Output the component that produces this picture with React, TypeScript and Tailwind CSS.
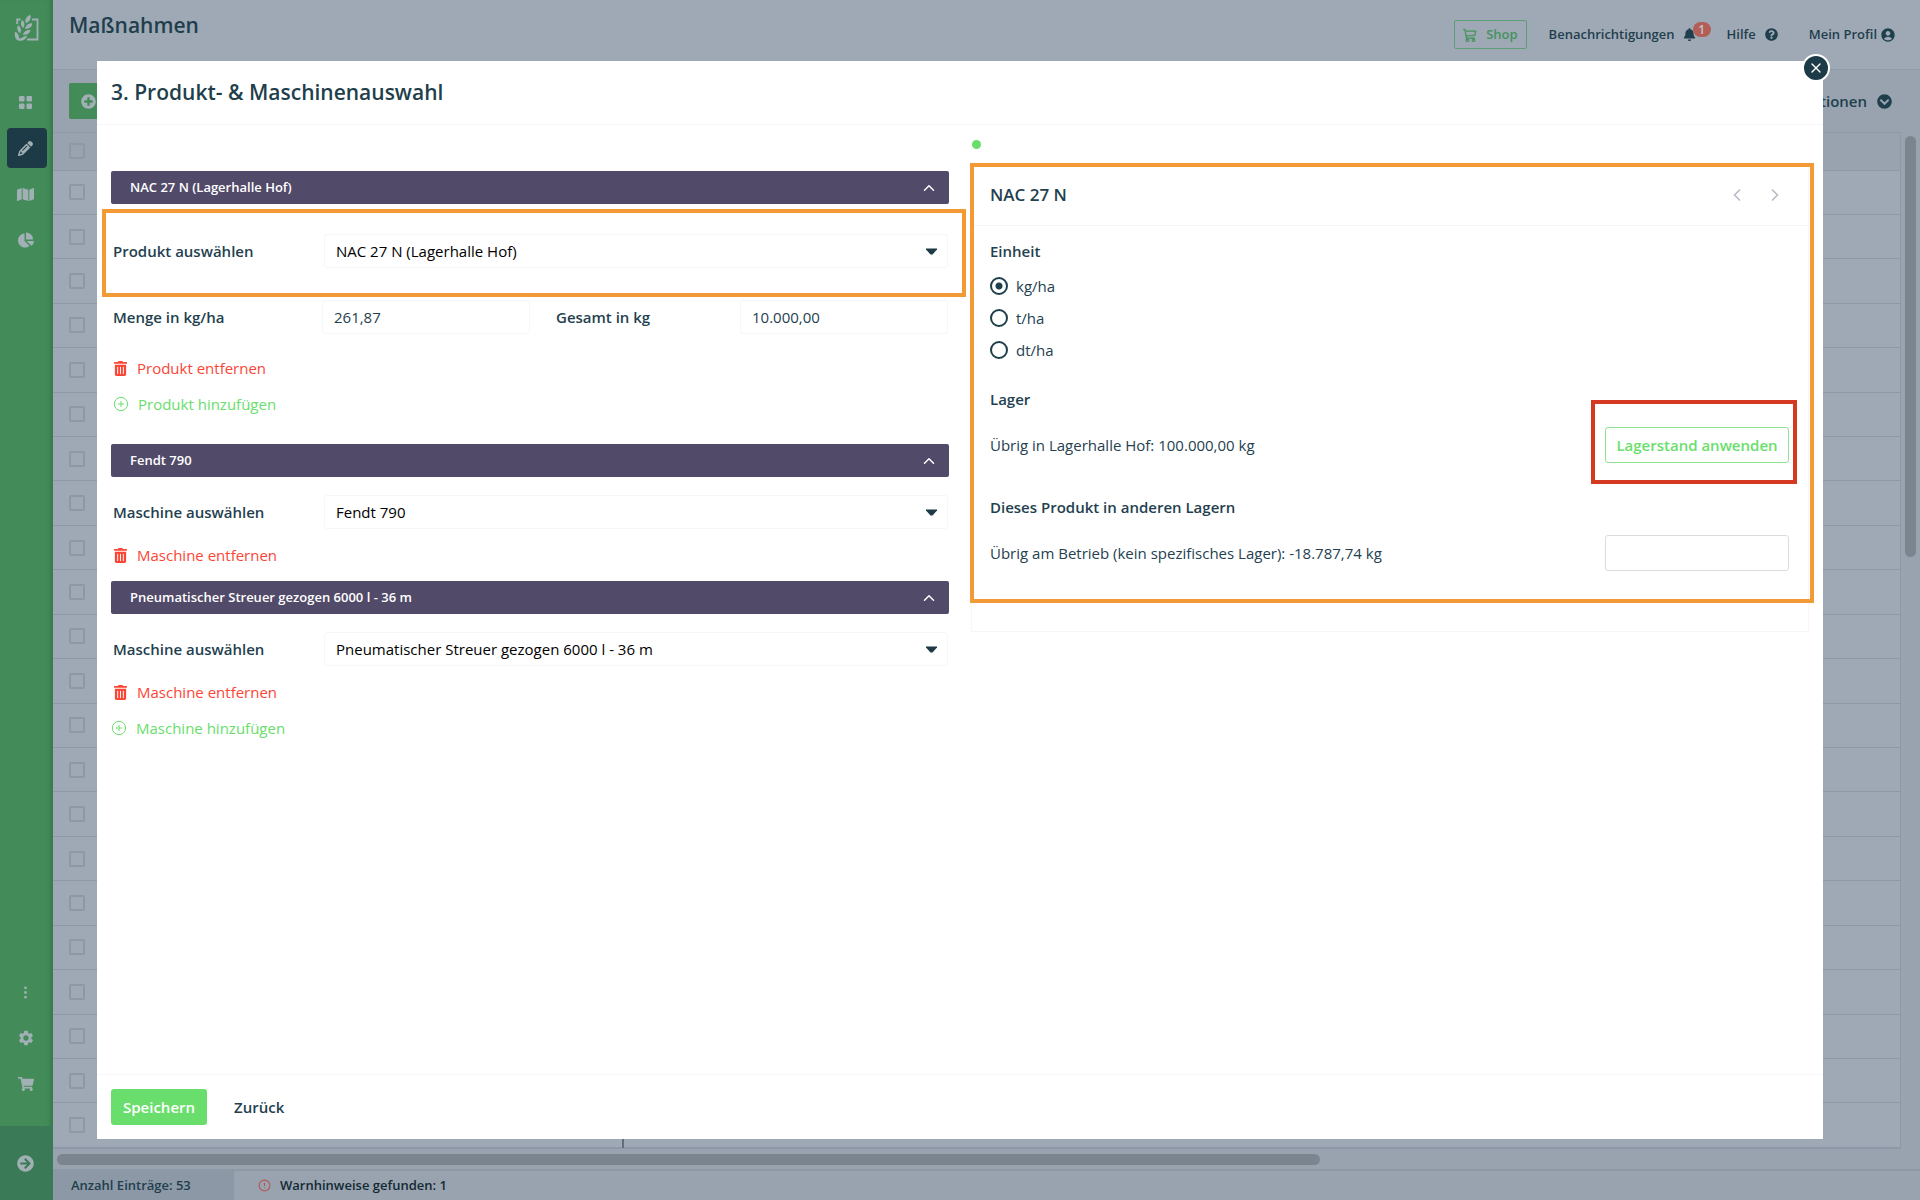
import { type ReactNode, useId, useState } from "react";
import { ChevronLeft, ChevronRight, ChevronUp, CircleAlert, CirclePlus, X } from "lucide-react";
import { BsCart3, BsGridFill, BsThreeDotsVertical } from "react-icons/bs";
import {
  FaArrowCircleRight,
  FaBell,
  FaChartPie,
  FaChevronCircleDown,
  FaMap,
  FaPlusCircle,
  FaQuestionCircle,
  FaShoppingCart,
  FaTrashAlt,
} from "react-icons/fa";
import { FaPencil } from "react-icons/fa6";
import { MdAccountCircle, MdSettings } from "react-icons/md";

const ROWS = Array.from({ length: 22 }, (_, i) => i + 1);

function Logo() {
  return (
    <svg viewBox="0 0 26 28" className="h-7 w-[26px]" fill="none" aria-hidden="true">
      <path d="M3.200 10V5.500H6.500M18 5.500H23.500V25.500H13" stroke="currentColor" strokeWidth="1.800" />
      <g fill="currentColor">
        <path d="M16.200.8C17.400 4 16.400 7 12 9.300 10.300 6 12 2.700 16.200.8Z" />
        <path d="M8.200 6C10.600 8 11.200 10.600 9.300 14 6.600 12 6.200 9 8.200 6Z" />
        <path d="M18.200 9.200C18.400 12.600 15.800 14.900 11 14.900 11.800 11.200 14.400 9.100 18.200 9.200Z" />
        <path d="M4 11.300C6.800 13 7.700 16 6.300 19.300 3.300 17.500 2.500 14.500 4 11.300Z" />
        <path d="M16.500 16C16.200 19.300 13.400 21 8.800 20.700 9.800 17.400 12.500 15.600 16.500 16Z" />
        <path d="M1.200 17.500C3.800 19 5.200 21.500 5 24.500 9 24.500 9.500 21.800 13.200 21.800 12 25.600 8.500 27.600 4.200 26.500 1.300 25.600.1 21.500 1.200 17.500Z" />
      </g>
    </svg>
  );
}

function NavButton({ label, active, children }: { label: string; active?: boolean; children: ReactNode }) {
  return (
    <button
      type="button"
      aria-label={label}
      className={`flex size-10 items-center justify-center rounded-sm pr-[2px] ${active ? "bg-[#1d3a47]" : ""}`}
    >
      {children}
    </button>
  );
}

function Sidebar() {
  return (
    <nav className="flex w-[53px] shrink-0 flex-col items-center bg-[#438c59] text-[#a0b0b4] shadow-[inset_-5px_0_5px_-3px_#34744a]">
      <a href="#start" aria-label="Startseite" className="mt-[14px] mb-10">
        <Logo />
      </a>
      <div className="flex flex-col gap-[6px]">
        <NavButton label="Übersicht">
          <BsGridFill size={15} />
        </NavButton>
        <NavButton label="Maßnahmen" active>
          <FaPencil size={15} />
        </NavButton>
        <NavButton label="Karte">
          <FaMap size={17} />
        </NavButton>
        <NavButton label="Auswertung">
          <FaChartPie size={16} />
        </NavButton>
      </div>
      <div className="mt-auto mb-[22px] flex flex-col gap-[6px]">
        <NavButton label="Mehr">
          <BsThreeDotsVertical size={15} />
        </NavButton>
        <NavButton label="Einstellungen">
          <MdSettings size={18} />
        </NavButton>
        <NavButton label="Shop">
          <FaShoppingCart size={16} />
        </NavButton>
      </div>
      <div className="flex h-[74px] w-full items-center justify-center bg-[#3b7a56]">
        <NavButton label="Menü ausklappen">
          <FaArrowCircleRight size={17} />
        </NavButton>
      </div>
    </nav>
  );
}

function TopBar() {
  return (
    <header className="flex h-[70px] shrink-0 items-start justify-between border-b border-[#919cab] pr-6 pl-4">
      <h1 className="mt-[9px] text-[21px] leading-8 font-semibold">Maßnahmen</h1>
      <div className="mt-5 flex h-[29px] items-center text-[13px] font-semibold">
        <a
          href="#shop"
          className="flex h-full items-center gap-[9px] rounded-[2px] border border-[#5a9f75] px-2 text-[#45935e]"
        >
          <BsCart3 size={14} strokeWidth={0.5} />
          Shop
        </a>
        <a href="#benachrichtigungen" className="ml-[22px] flex items-center gap-2">
          Benachrichtigungen
          <span className="relative">
            <FaBell size={13} />
            <span className="absolute -top-[6px] left-[10px] flex h-[15px] w-[18px] items-center justify-center rounded-full bg-[#b35f58] text-xs text-[#c5c3cb]">
              1
            </span>
          </span>
        </a>
        <a href="#hilfe" className="ml-[31px] flex items-center gap-[9px]">
          Hilfe
          <FaQuestionCircle size={13} />
        </a>
        <a href="#profil" className="ml-[31px] flex items-center gap-[3px]">
          Mein Profil
          <MdAccountCircle size={16} />
        </a>
      </div>
    </header>
  );
}

function RowCheckbox({ label }: { label: string }) {
  return (
    <input
      type="checkbox"
      aria-label={label}
      className="block size-4 appearance-none rounded-[2px] border-2 border-[#8c98a6]"
    />
  );
}

function Background() {
  return (
    <div className="flex h-screen bg-[#9fa9b6] text-[#1f3f4d]">
      <Sidebar />
      <div className="flex min-w-0 flex-1 flex-col">
        <TopBar />
        <div className="flex h-[62px] shrink-0 items-center justify-between bg-[#99a3b0] pr-7 pl-4">
          <button
            type="button"
            aria-label="Maßnahme hinzufügen"
            className="flex h-9 w-40 items-center rounded-[2px] bg-[#438c59] px-3 text-[#a0b0b4]"
          >
            <FaPlusCircle size={15} />
          </button>
          <button type="button" className="flex items-center gap-[10px] text-[15px] font-semibold">
            Aktionen
            <FaChevronCircleDown size={15} />
          </button>
        </div>
        <div className="flex min-h-0 flex-1 bg-[#99a3b0]">
          <div className="relative min-w-0 flex-1 border-y border-r border-[#8d99a8]">
            <table className="h-full w-full border-collapse">
              <tbody>
                <tr className="h-[37px] bg-[#99a3b0]">
                  <td className="border-b border-[#8d99a8] py-0 pl-4">
                    <RowCheckbox label="Alle auswählen" />
                  </td>
                </tr>
                {ROWS.map((row) => (
                  <tr key={row} className="bg-[#9fa9b6]">
                    <td className="border-b border-[#8d99a8] py-0 pl-4">
                      <RowCheckbox label={`Eintrag ${row} auswählen`} />
                    </td>
                  </tr>
                ))}
              </tbody>
            </table>
            <div className="absolute bottom-0 left-[569px] h-4 w-[2px] bg-[#5f6f7b]" />
          </div>
          <div className="w-[19px] shrink-0 pt-1 pl-1">
            <div className="h-[421px] w-[11px] rounded-full bg-[#7b858f]" />
          </div>
        </div>
        <div className="flex h-5 shrink-0 items-center bg-[#99a3b0] pl-1">
          <div className="h-[11px] w-[1263px] rounded-full bg-[#7b858f]" />
        </div>
        <footer className="flex h-[31px] shrink-0 border-t-2 border-[#8c98a4] bg-[#99a3b0] text-[13px] font-semibold">
          <div className="flex w-[181px] items-center bg-[#8c98a6] pl-[18px]">Anzahl Einträge: 53</div>
          <div className="flex items-center gap-[9px] pl-6 text-[#132a33]">
            <CircleAlert size={13} className="text-[#b3564f]" />
            Warnhinweise gefunden: 1
          </div>
        </footer>
      </div>
    </div>
  );
}

function Section({ title, children }: { title: string; children: ReactNode }) {
  return (
    <section>
      <button
        type="button"
        aria-expanded="true"
        className="flex h-[33px] w-full items-center justify-between rounded-[2px] bg-[#524a69] pr-[11px] pl-[19px] text-[13px] font-semibold text-white"
      >
        {title}
        <ChevronUp size={18} />
      </button>
      {children}
    </section>
  );
}

function SelectRow({ label, value }: { label: string; value: string }) {
  const id = useId();
  return (
    <div className="flex h-[34px] items-center">
      <label htmlFor={id} className="w-[213px] shrink-0 pl-[2px] font-semibold">
        {label}
      </label>
      <div className="relative mr-px flex-1">
        <select
          id={id}
          className="block h-[34px] w-full appearance-none rounded-[3px] border border-[#f7f7f7] bg-white pl-[11px] text-black"
        >
          <option>{value}</option>
        </select>
        <svg viewBox="0 0 11 7" className="pointer-events-none absolute top-[14px] right-[11px] h-[7px] w-[11px]">
          <path d="M0 0.500H11V1.500L6.500 6.500H4.500L0 1.500Z" fill="#1d3a47" />
        </svg>
      </div>
    </div>
  );
}

function NumberField({ label, value, className }: { label: string; value: string; className: string }) {
  const id = useId();
  return (
    <>
      <label htmlFor={id} className={`shrink-0 font-semibold ${className}`}>
        {label}
      </label>
      <input
        id={id}
        defaultValue={value}
        className="h-[34px] w-0 flex-1 rounded-[3px] border border-[#f7f7f7] px-[11px]"
      />
    </>
  );
}

function RemoveButton({ children }: { children: string }) {
  return (
    <button type="button" className="flex h-6 items-center gap-[9px] pl-[2px] text-[#fb4536]">
      <FaTrashAlt size={15} />
      {children}
    </button>
  );
}

function AddButton({ children }: { children: string }) {
  return (
    <button type="button" className="flex h-6 items-center gap-[9px] text-[#69de6c]">
      <CirclePlus size={16} strokeWidth={1.5} />
      {children}
    </button>
  );
}

function ProductColumn() {
  return (
    <div className="flex-1 pt-[46px]">
      <Section title="NAC 27 N (Lagerhalle Hof)">
        <div className="relative mt-[30px]">
          <SelectRow label="Produkt auswählen" value="NAC 27 N (Lagerhalle Hof)" />
          <div className="pointer-events-none absolute -top-[25px] -right-[17px] -bottom-[29px] -left-[9px] border-4 border-[#f39a36]" />
        </div>
        <div className="mt-8 flex items-center pr-px">
          <NumberField label="Menge in kg/ha" value="261,87" className="w-[211px] pl-[2px]" />
          <NumberField label="Gesamt in kg" value="10.000,00" className="w-[210px] pl-[26px]" />
        </div>
        <div className="mt-[22px] mb-3">
          <RemoveButton>Produkt entfernen</RemoveButton>
        </div>
        <div className="mb-7 pl-[2px]">
          <AddButton>Produkt hinzufügen</AddButton>
        </div>
      </Section>
      <Section title="Fendt 790">
        <div className="mt-[18px] mb-[14px]">
          <SelectRow label="Maschine auswählen" value="Fendt 790" />
        </div>
        <RemoveButton>Maschine entfernen</RemoveButton>
      </Section>
      <div className="mt-[14px]">
        <Section title="Pneumatischer Streuer gezogen 6000 l - 36 m">
          <div className="mt-[18px] mb-[14px]">
            <SelectRow label="Maschine auswählen" value="Pneumatischer Streuer gezogen 6000 l - 36 m" />
          </div>
          <RemoveButton>Maschine entfernen</RemoveButton>
        </Section>
      </div>
      <div className="mt-3">
        <AddButton>Maschine hinzufügen</AddButton>
      </div>
    </div>
  );
}

function DetailColumn() {
  const [unit, setUnit] = useState("kg/ha");
  return (
    <div className="flex-1 pt-[15px]">
      <div className="ml-px size-[9px] rounded-full bg-[#69de6c]" />
      <article className="relative mt-4 h-[467px] border border-[#f7f7f7]">
        <div className="flex h-[60px] items-center justify-between border-b border-[#f5f5f5] pr-[23px] pb-[2px] pl-[18px]">
          <h3 className="text-[17px] font-semibold">NAC 27 N</h3>
          <div className="flex gap-[18px] text-[#bdb9c4]">
            <button type="button" aria-label="Vorheriges Produkt">
              <ChevronLeft size={20} />
            </button>
            <button type="button" aria-label="Nächstes Produkt">
              <ChevronRight size={20} />
            </button>
          </div>
        </div>
        <div className="pr-[19px] pl-[18px]">
          <fieldset className="pt-[15px]">
            <legend className="contents">
              <span className="block h-5 leading-5 font-semibold">Einheit</span>
            </legend>
            <div className="mt-[13px] flex flex-col gap-2">
              {["kg/ha", "t/ha", "dt/ha"].map((option) => (
                <label key={option} className="flex h-6 items-center gap-2">
                  <input
                    type="radio"
                    name="unit"
                    checked={unit === option}
                    onChange={() => setUnit(option)}
                    className="size-[18px] appearance-none rounded-full border-2 border-[#1f3f4d] checked:bg-[radial-gradient(circle,#1f3f4d_3px,transparent_4px)]"
                  />
                  {option}
                </label>
              ))}
            </div>
          </fieldset>
          <h4 className="mt-[27px] leading-5 font-semibold">Lager</h4>
          <div className="mt-[18px] flex items-center justify-between">
            <span>Übrig in Lagerhalle Hof: 100.000,00 kg</span>
            <div className="relative">
              <button
                type="button"
                className="block h-9 w-[184px] rounded-[3px] border border-[#8ee490] font-semibold text-[#69de6c]"
              >
                Lagerstand anwenden
              </button>
              <div className="pointer-events-none absolute -top-[27px] -right-2 -bottom-[21px] -left-[14px] border-4 border-[#d43a22]" />
            </div>
          </div>
          <h4 className="mt-[34px] leading-5 font-semibold">Dieses Produkt in anderen Lagern</h4>
          <div className="mt-[18px] flex items-center justify-between">
            <label htmlFor="farm-stock">Übrig am Betrieb (kein spezifisches Lager): -18.787,74 kg</label>
            <input id="farm-stock" className="h-9 w-[184px] rounded-[3px] border border-[#dcdcdc] px-2" />
          </div>
        </div>
        <div className="pointer-events-none absolute -top-[3px] -right-[6px] bottom-[28px] -left-[2px] border-4 border-[#f39a36]" />
      </article>
    </div>
  );
}

function Modal() {
  return (
    <div className="fixed inset-0 px-[97px] py-[61px] text-[15px] text-[#243f4f]">
      <div
        role="dialog"
        aria-labelledby="modal-title"
        className="relative flex h-full flex-col bg-white"
      >
        <header className="flex h-16 shrink-0 items-center border-b border-[#f7f7f7] px-[14px]">
          <h2 id="modal-title" className="text-[21px] font-semibold text-[#1f3f4d]">
            3. Produkt- &amp; Maschinenauswahl
          </h2>
        </header>
        <div className="flex min-h-0 flex-1 gap-[22px] px-[14px]">
          <ProductColumn />
          <DetailColumn />
        </div>
        <footer className="flex h-[65px] shrink-0 items-center gap-[27px] border-t border-[#f7f7f7] px-[14px] font-semibold">
          <button type="button" className="h-9 rounded-[3px] bg-[#69de6c] px-3 text-white">
            Speichern
          </button>
          <button type="button">Zurück</button>
        </footer>
        <button
          type="button"
          aria-label="Schließen"
          className="absolute -top-[7px] -right-[7px] flex size-7 items-center justify-center rounded-full border-2 border-white bg-[#1d3a47] text-white"
        >
          <X size={16} />
        </button>
      </div>
    </div>
  );
}

export default function App() {
  return (
    <div className="font-['Open_Sans',sans-serif]">
      <Background />
      <Modal />
    </div>
  );
}
